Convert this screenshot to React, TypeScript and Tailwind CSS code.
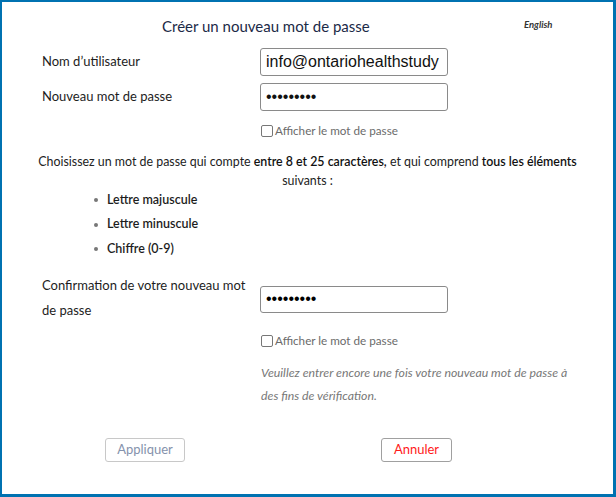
import React from 'react';

const font = { fontFamily: 'Lato, "Noto Sans", sans-serif' };

const Field = ({ label, value, password }: { label: string; value: string; password?: boolean }) => (
  <div className="flex items-center">
    <label className="w-[218px] text-[13px] text-[#1d1d1d]">{label}</label>
    <input
      readOnly
      type={password ? 'password' : 'text'}
      value={value}
      className="w-[188px] h-[28px] px-[5px] border border-[#8a8a8a] rounded-[3px] text-[16px] text-[#111] outline-none"
      style={{ fontFamily: '"Liberation Sans", Arial, sans-serif' }}
    />
  </div>
);

const ShowPassword = () => (
  <label className="flex items-center gap-[2px] text-[11.7px] text-[#6b6b6b]">
    <span className="w-[12px] h-[12px] border border-[#777] rounded-[2px] bg-white"></span>
    Afficher le mot de passe
  </label>
);

const App = () => {
  return (
    <div
      className="w-[616px] h-[497px] bg-white border-t-2 border-l-2 border-r-[3px] border-b-[3px] border-[#0072b1] relative"
      style={font}
    >
      <header className="relative h-[46px] flex items-center">
        <h1 className="w-full pl-[160px] pt-[2px] text-[15px] text-[#1b2a47]">Créer un nouveau mot de passe</h1>
        <span className="absolute left-[522px] top-[16px] text-[9.5px] italic font-bold text-[#333]">English</span>
      </header>

      <div className="pl-[40px] flex flex-col gap-[7px]">
        <Field label="Nom d’utilisateur" value="info@ontariohealthstudy" />
        <Field label="Nouveau mot de passe" value="•••••••••" password />
      </div>

      <div className="pl-[259px] pt-[11px]">
        <ShowPassword />
      </div>

      <div className="pt-[12px] text-center text-[12.4px] leading-[19px] text-[#222]">
        <p className="px-[28px]">
          Choisissez un mot de passe qui compte <span className="font-semibold text-[#111]">entre 8 et 25 caractères,</span> et qui comprend{' '}
          <span className="font-semibold text-[#111]">tous les éléments</span> suivants :
        </p>
      </div>

      <ul className="pl-[92px] pt-[1px] text-[12.5px] font-semibold text-[#1d1d1d] flex flex-col gap-[6px]">
        {['Lettre majuscule', 'Lettre minuscule', 'Chiffre (0-9)'].map((t) => (
          <li key={t} className="flex items-center gap-[9px]">
            <span className="w-[4px] h-[4px] rounded-full bg-[#777]"></span>
            {t}
          </li>
        ))}
      </ul>

      <div className="pl-[40px] pt-[14px] flex items-start">
        <label className="w-[218px] text-[13px] leading-[25px] text-[#1d1d1d]">
          Confirmation de votre nouveau mot de passe
        </label>
        <input
          readOnly
          type="password"
          value="•••••••••"
          className="mt-[13px] w-[188px] h-[27px] px-[5px] border border-[#8a8a8a] rounded-[3px] text-[16px] outline-none"
          style={{ fontFamily: '"Liberation Sans", Arial, sans-serif' }}
        />
      </div>

      <div className="pl-[259px] pt-[9px]">
        <ShowPassword />
        <p className="pt-[12px] pr-[40px] text-[12.3px] leading-[23px] italic text-[#777]">
          Veuillez entrer encore une fois votre nouveau mot de passe à des fins de vérification.
        </p>
      </div>

      <div className="flex pt-[29px]">
        <div className="pl-[103px]">
          <button className="w-[80px] h-[24px] border border-[#c8c8c8] rounded-[3px] text-[13px] text-[#8592ac] bg-white">
            Appliquer
          </button>
        </div>
        <div className="pl-[196px]">
          <button className="w-[71px] h-[24px] border border-[#a0a0a0] rounded-[3px] text-[13px] text-[#ff1a1a] bg-white">
            Annuler
          </button>
        </div>
      </div>
    </div>
  );
};

export default App;
